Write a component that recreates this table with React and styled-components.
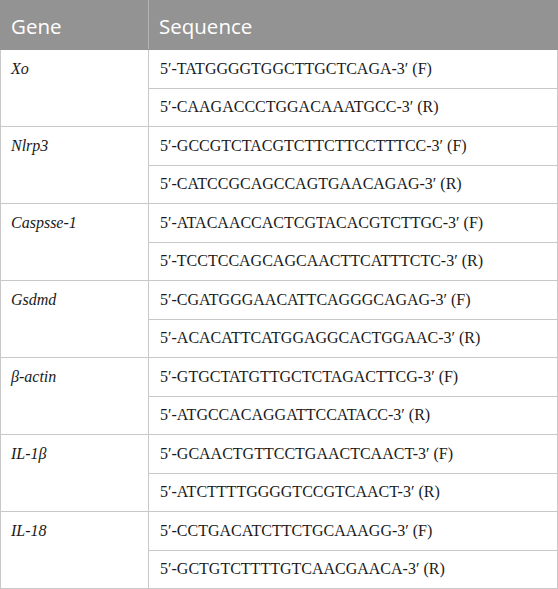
import React from "react";
import styled, { createGlobalStyle } from "styled-components";

const GlobalStyle = createGlobalStyle`
  html, body {
    margin: 0;
    padding: 0;
    background: #ffffff;
  }
`;

const serif = `"Liberation Serif", "Times New Roman", serif`;

const Table = styled.table`
  width: 558px;
  border-collapse: collapse;
  table-layout: fixed;
`;

const HeadCell = styled.th`
  height: 46px;
  padding: 2px 0 0 10px;
  background: #939393;
  color: #ffffff;
  font-family: "Open Sans", "Noto Sans", sans-serif;
  font-weight: 400;
  font-size: 20.5px;
  text-align: left;
  border: 1px solid #939393;
  border-right-color: ${(p) => (p.$last ? "#939393" : "#b4b4b4")};
`;

const GeneCell = styled.td`
  vertical-align: top;
  padding: 10px 0 0 10px;
  font-family: ${serif};
  font-style: italic;
  font-size: 16px;
  line-height: 18px;
  color: #1a1a1a;
  border: 1px solid #c8c8c8;
`;

const SeqCell = styled.td`
  height: 37.5px;
  padding: 0 0 0 11px;
  font-family: ${serif};
  font-size: 16px;
  line-height: 18px;
  color: #1a1a1a;
  border: 1px solid #c8c8c8;
  white-space: nowrap;
`;

const primers = [
  ["Xo", "TATGGGGTGGCTTGCTCAGA", "CAAGACCCTGGACAAATGCC"],
  ["Nlrp3", "GCCGTCTACGTCTTCTTCCTTTCC", "CATCCGCAGCCAGTGAACAGAG"],
  ["Caspsse-1", "ATACAACCACTCGTACACGTCTTGC", "TCCTCCAGCAGCAACTTCATTTCTC"],
  ["Gsdmd", "CGATGGGAACATTCAGGGCAGAG", "ACACATTCATGGAGGCACTGGAAC"],
  ["β-actin", "GTGCTATGTTGCTCTAGACTTCG", "ATGCCACAGGATTCCATACC"],
  ["IL-1β", "GCAACTGTTCCTGAACTCAACT", "ATCTTTTGGGGTCCGTCAACT"],
  ["IL-18", "CCTGACATCTTCTGCAAAGG", "GCTGTCTTTTGTCAACGAACA"],
];

export default function App() {
  return (
    <>
      <GlobalStyle />
      <Table>
        <colgroup>
          <col style={{ width: 148 }} />
          <col />
        </colgroup>
        <thead>
          <tr>
            <HeadCell>Gene</HeadCell>
            <HeadCell $last>Sequence</HeadCell>
          </tr>
        </thead>
        <tbody>
          {primers.map(([gene, fwd, rev]) => (
            <React.Fragment key={gene}>
              <tr>
                <GeneCell rowSpan={2}>{gene}</GeneCell>
                <SeqCell>5′-{fwd}-3′ (F)</SeqCell>
              </tr>
              <tr>
                <SeqCell>5′-{rev}-3′ (R)</SeqCell>
              </tr>
            </React.Fragment>
          ))}
        </tbody>
      </Table>
    </>
  );
}
